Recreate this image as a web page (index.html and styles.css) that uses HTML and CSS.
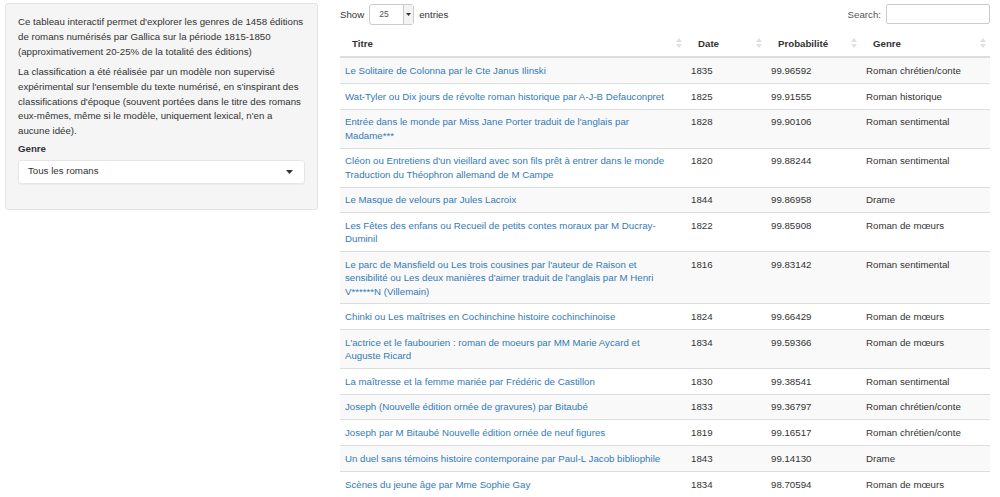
FILE: index.html
```html
<!DOCTYPE html>
<html lang="fr">
<head>
<meta charset="utf-8">
<title>Genres des romans 1815-1850</title>
<link rel="stylesheet" href="styles.css">
</head>
<body>
<div class="page">
  <aside class="well">
    <p>Ce tableau interactif permet d'explorer les genres de 1458 éditions de romans numérisés par Gallica sur la période 1815-1850 (approximativement 20-25% de la totalité des éditions)</p>
    <p>La classification a été réalisée par un modèle non supervisé expérimental sur l'ensemble du texte numérisé, en s'inspirant des classifications d'époque (souvent portées dans le titre des romans eux-mêmes, même si le modèle, uniquement lexical, n'en a aucune&nbsp;idée).</p>
    <label class="field-label">Genre</label>
    <div class="select-box">
      <span>Tous les romans</span>
      <svg class="caret" width="7" height="4" viewBox="0 0 7 4"><path d="M0 0h7L3.5 4z" fill="#333"/></svg>
    </div>
  </aside>
  <main class="main">
    <div class="controls">
      <div class="length">Show
        <span class="len-select"><span class="len-val">25</span><span class="len-btn"><svg width="5" height="3" viewBox="0 0 5 3"><path d="M0 0h5L2.5 3z" fill="#333"/></svg></span></span>
        entries</div>
      <div class="search">Search: <span class="search-input"></span></div>
    </div>
    <table class="data">
      <colgroup><col class="c1"><col class="c2"><col class="c3"><col class="c4"></colgroup>
      <thead>
        <tr>
          <th>Titre<svg class="sort" width="6" height="10" viewBox="0 0 6 10"><path d="M3 0L6 4H0z M3 10L0 6h6z" fill="#e0e0e0"/></svg></th>
          <th>Date<svg class="sort" width="6" height="10" viewBox="0 0 6 10"><path d="M3 0L6 4H0z M3 10L0 6h6z" fill="#e0e0e0"/></svg></th>
          <th>Probabilité<svg class="sort" width="6" height="10" viewBox="0 0 6 10"><path d="M3 0L6 4H0z M3 10L0 6h6z" fill="#e0e0e0"/></svg></th>
          <th>Genre<svg class="sort" width="6" height="10" viewBox="0 0 6 10"><path d="M3 0L6 4H0z M3 10L0 6h6z" fill="#e0e0e0"/></svg></th>
        </tr>
      </thead>
      <tbody>
        <tr><td><a>Le Solitaire de Colonna par le Cte Janus Ilinski</a></td><td>1835</td><td>99.96592</td><td>Roman chrétien/conte</td></tr>
        <tr><td><a>Wat-Tyler ou Dix jours de révolte roman historique par A-J-B Defauconpret</a></td><td>1825</td><td>99.91555</td><td>Roman historique</td></tr>
        <tr><td><a>Entrée dans le monde par Miss Jane Porter traduit de l'anglais par Madame***</a></td><td>1828</td><td>99.90106</td><td>Roman sentimental</td></tr>
        <tr><td><a>Cléon ou Entretiens d'un vieillard avec son fils prêt à entrer dans le monde Traduction du Théophron allemand de M Campe</a></td><td>1820</td><td>99.88244</td><td>Roman sentimental</td></tr>
        <tr><td><a>Le Masque de velours par Jules Lacroix</a></td><td>1844</td><td>99.86958</td><td>Drame</td></tr>
        <tr><td><a>Les Fêtes des enfans ou Recueil de petits contes moraux par M Ducray-Duminil</a></td><td>1822</td><td>99.85908</td><td>Roman de mœurs</td></tr>
        <tr><td><a>Le parc de Mansfield ou Les trois cousines par l'auteur de Raison et sensibilité ou Les deux manières d'aimer traduit de l'anglais par M Henri V******N (Villemain)</a></td><td>1816</td><td>99.83142</td><td>Roman sentimental</td></tr>
        <tr><td><a>Chinki ou Les maîtrises en Cochinchine histoire cochinchinoise</a></td><td>1824</td><td>99.66429</td><td>Roman de mœurs</td></tr>
        <tr><td><a>L'actrice et le faubourien : roman de moeurs par MM Marie Aycard et Auguste Ricard</a></td><td>1834</td><td>99.59366</td><td>Roman de mœurs</td></tr>
        <tr><td><a>La maîtresse et la femme mariée par Frédéric de Castillon</a></td><td>1830</td><td>99.38541</td><td>Roman sentimental</td></tr>
        <tr><td><a>Joseph (Nouvelle édition ornée de gravures) par Bitaubé</a></td><td>1833</td><td>99.36797</td><td>Roman chrétien/conte</td></tr>
        <tr><td><a>Joseph par M Bitaubé Nouvelle édition ornée de neuf figures</a></td><td>1819</td><td>99.16517</td><td>Roman chrétien/conte</td></tr>
        <tr><td><a>Un duel sans témoins histoire contemporaine par Paul-L Jacob bibliophile</a></td><td>1843</td><td>99.14130</td><td>Drame</td></tr>
        <tr><td><a>Scènes du jeune âge par Mme Sophie Gay</a></td><td>1834</td><td>98.70594</td><td>Roman de mœurs</td></tr>
      </tbody>
    </table>
  </main>
</div>
</body>
</html>
```

FILE: styles.css
```css
html, body {
  margin: 0;
  padding: 0;
  background: #fff;
}
body {
  font-family: "Liberation Sans", Arial, sans-serif;
  font-size: 9.7px;
  color: #333;
  overflow: hidden;
}
.page {
  display: flex;
  align-items: flex-start;
  padding: 3px 10px 0 5px;
  gap: 22px;
}
.well {
  flex: 0 0 313px;
  box-sizing: border-box;
  background: #f5f5f5;
  border: 1px solid #e3e3e3;
  border-radius: 3px;
  padding: 11px 11px 25px 12px;
  line-height: 14.9px;
  font-size: 9.7px;
}
.well p {
  margin: 0 0 5px;
}
.field-label {
  display: block;
  font-weight: bold;
  line-height: 10px;
  margin: 0 0 5.5px;
}
.select-box {
  display: flex;
  align-items: center;
  justify-content: space-between;
  height: 24px;
  margin-right: 1px;
  box-sizing: border-box;
  background: #fff;
  border: 1px solid #e6e6e6;
  border-radius: 3px;
  padding: 0 11px 0 9px;
  box-shadow: 0 1px 1px rgba(0,0,0,0.04);
}
.main {
  flex: 1;
  min-width: 0;
}
.controls {
  display: flex;
  justify-content: space-between;
  align-items: center;
  height: 22px;
  margin-bottom: 5px;
}
.length {
  display: flex;
  align-items: center;
  gap: 5px;
}
.len-select {
  display: inline-flex;
  align-items: stretch;
  width: 45px;
  height: 21px;
  box-sizing: border-box;
  border: 1px solid #ccc;
  border-radius: 3px;
  background: #fff;
  font-size: 8.5px;
}
.len-val {
  flex: 1;
  display: flex;
  align-items: center;
  padding-left: 9px;
  color: #555;
}
.len-btn {
  width: 9px;
  display: flex;
  align-items: center;
  justify-content: center;
  border-left: 1px solid #ccc;
  background: #f3f3f3;
}
.search {
  display: flex;
  align-items: center;
  gap: 5px;
  color: #555;
}
.search-input {
  display: block;
  width: 104px;
  height: 20px;
  box-sizing: border-box;
  border: 1px solid #ccc;
  border-radius: 2px;
  background: #fff;
}
table.data {
  width: 650px;
  border-collapse: collapse;
  table-layout: fixed;
}
col.c1 { width: 346px; }
col.c2 { width: 80px; }
col.c3 { width: 95px; }
col.c4 { width: 129px; }
table.data th {
  position: relative;
  text-align: left;
  font-weight: bold;
  color: #333;
  padding: 7px 12px 6px 12px;
  line-height: 13.3px;
  border-bottom: 2px solid #ddd;
}
.sort {
  position: absolute;
  right: 4px;
  top: 8px;
}
table.data td {
  padding: 5.7px 16px 5.7px 5px;
  line-height: 13.3px;
  vertical-align: top;
  border-top: 1px solid #ddd;
}
table.data tbody tr:nth-child(odd) {
  background: #f9f9f9;
}
table.data tbody tr:first-child td {
  border-top: none;
}
table.data a {
  color: #337ab7;
  text-decoration: none;
}
```
